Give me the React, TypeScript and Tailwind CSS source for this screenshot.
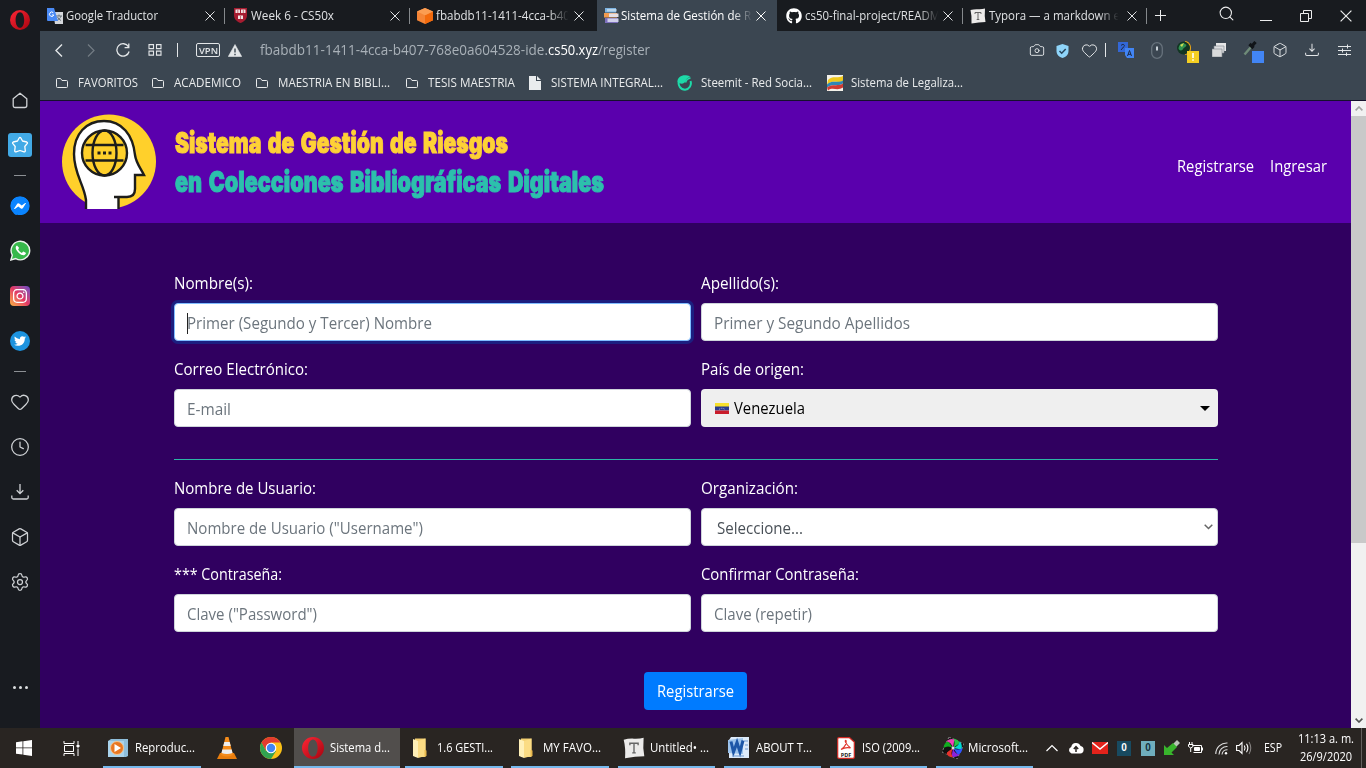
import React, { useLayoutEffect, useRef } from "react";
import { FaFacebookMessenger, FaGithub, FaInstagram, FaTwitter } from "react-icons/fa";
import { Box, Camera, Clock, Heart, Search, Settings } from "lucide-react";

/* Condenses or widens one line of text so that it fills a given width. */
function Fit({ w, children, className = "" }: { w: number; children: string; className?: string }) {
  const ref = useRef<HTMLSpanElement>(null);
  useLayoutEffect(() => {
    const el = ref.current;
    if (!el) return;
    el.style.transform = "none";
    const natural = el.getBoundingClientRect().width;
    if (natural > 0) el.style.transform = `scaleX(${w / natural})`;
  }, [w, children]);
  return (
    <span className={`block shrink-0 whitespace-pre ${className}`} style={{ width: w }}>
      <span ref={ref} className="inline-block origin-left">{children}</span>
    </span>
  );
}

function Slot({ className, children }: { className: string; children?: React.ReactNode }) {
  return <div className={`flex shrink-0 items-center justify-center ${className}`}>{children}</div>;
}

function CloseX({ size = 10 }: { size?: number }) {
  return (
    <svg width={size} height={size} viewBox="0 0 10 10" className="shrink-0" stroke="currentColor" strokeWidth="1" fill="none">
      <path d="M.5.5l9 9M9.5.5l-9 9" />
    </svg>
  );
}

function OperaO({ size }: { size: number }) {
  return (
    <svg width={size} height={size} viewBox="0 0 20 20" className="shrink-0">
      <defs>
        <linearGradient id="opera" x1="0" y1="0" x2="1" y2="1">
          <stop offset="0" stopColor="#ff2636" />
          <stop offset="1" stopColor="#a5040f" />
        </linearGradient>
      </defs>
      <path fillRule="evenodd" fill="url(#opera)" d="M10 0a10 10 0 100 20 10 10 0 000-20zm0 2.200c2.600 0 4.200 3.400 4.200 7.800s-1.600 7.800-4.200 7.800S5.600 14.400 5.600 10 7.400 2.200 10 2.200z" />
    </svg>
  );
}

function DownloadTray({ size = 18 }: { size?: number }) {
  return (
    <svg width={size} height={size} viewBox="0 0 18 18" fill="none" stroke="currentColor" strokeWidth="1.3">
      <path d="M9 1v9.500M5.700 7.300L9 10.600l3.300-3.300M.8 12.500v2c0 1 .5 1.500 1.500 1.500h13.400c1 0 1.500-.5 1.500-1.500v-2" />
    </svg>
  );
}

/* ---------- tab strip ---------- */

function TranslateIcon() {
  return (
    <svg width="17" height="16" viewBox="0 0 17 16" className="shrink-0">
      <path d="M6 4h10v12H8z" fill="#d5d8dc" />
      <path d="M9 8h6M12 6.500V8M14 8c-.5 2-2 3.500-4 4.500M10.500 9c.7 1.500 2 2.700 3.500 3.500" stroke="#657078" fill="none" />
      <path d="M0 0h7l4 13H1a1 1 0 01-1-1z" fill="#4a8af4" />
      <path d="M6.300 4.700A2.200 2.200 0 106.800 7H5" stroke="#fff" strokeWidth="1" fill="none" />
    </svg>
  );
}

function ShieldIcon() {
  return (
    <svg width="13" height="15" viewBox="0 0 13 15" className="shrink-0">
      <path d="M0 0h13v7c0 4-2.500 6.500-6.500 8C2.500 13.500 0 11 0 7z" fill="#a51c30" />
      <path d="M1.500 1.500h4.500v3.500H1.500zM7 1.500h4.500v3.500H7zM4 7.500h5v3.500H4z" fill="#f2e3e3" />
      <path d="M3.800 2v3M9.300 2v3M6.500 8v3" stroke="#a51c30" strokeWidth=".6" />
    </svg>
  );
}

function CubeIcon() {
  return (
    <svg width="16" height="16" viewBox="0 0 16 16" className="shrink-0">
      <path d="M8 0l8 3.500v8.700L8 16 0 12.200V3.500z" fill="#f58536" />
      <path d="M8 7.200L16 3.500v8.700L8 16z" fill="#f36a0c" />
      <path d="M8 0l8 3.500-8 3.700-8-3.700z" fill="#fb9d52" />
    </svg>
  );
}

function BooksIcon() {
  return (
    <svg width="15" height="15" viewBox="0 0 15 15" className="shrink-0">
      <path d="M1 0h11v4.500H1z" fill="#7db4e2" /><path d="M3 1h9.500v2.500H3z" fill="#b9d5ec" />
      <path d="M0 5h13v4.500H0z" fill="#f29b50" /><path d="M5 5.500h9.500v3.500H5z" fill="#e4dfe6" />
      <path d="M1 10h13v5H1z" fill="#7d70bd" /><path d="M3.500 10.500h11v3.500h-11z" fill="#d0d0ea" />
    </svg>
  );
}

function TyporaIcon({ size = 16 }: { size?: number }) {
  return (
    <svg width={size} height={size} viewBox="0 0 16 16" className="shrink-0">
      <path d="M.5 2Q4 1 8 1.200T15 .5Q14.300 8 15.500 14 9 14 1.500 15.500 2 8 .5 2z" fill="#ecebea" />
      <path d="M5 6V4.500h6V6M8 4.500v7M6.700 11.500h2.600" stroke="#666" strokeWidth="1" fill="none" />
    </svg>
  );
}

type TabProps = { icon: React.ReactNode; text: string; w: number; className: string; active?: boolean; fade?: boolean; sep?: boolean; gap: string };

function Tab({ icon, text, w, className, active, fade, sep, gap }: TabProps) {
  return (
    <div className={`flex h-[31px] shrink-0 items-center ${className} ${active ? "bg-[#3b4651] text-white" : "text-[#dfe1e3]"}`}>
      {icon}
      <Fit w={w} className={`${gap} ${fade ? "[mask-image:linear-gradient(to_right,black_84%,transparent_99%)]" : ""}`}>{text}</Fit>
      <span className="ml-auto flex items-center"><CloseX /></span>
      <span className={`ml-[9px] h-4 w-px ${sep ? "bg-[#85898c]" : ""}`} />
    </div>
  );
}

function TabStrip() {
  return (
    <div className="flex h-[31px] shrink-0 bg-[#181b1f] text-[12px] leading-[18px]">
      <Tab icon={<TranslateIcon />} text="Google Traductor" w={92} gap="ml-[2px]" className="w-[185px] pl-[7px]" sep />
      <Tab icon={<ShieldIcon />} text="Week 6 - CS50x" w={83} gap="ml-[4px]" className="w-[185px] pl-[9px]" sep />
      <Tab icon={<CubeIcon />} text="fbabdb11-1411-4cca-b40" w={134} gap="ml-[3px]" className="w-[187px] pl-[7px] pr-[3px]" fade />
      <Tab icon={<BooksIcon />} text="Sistema de Gestión de Ri" w={133} gap="ml-[2px]" className="w-[180px] pl-[7px] pr-[1px]" active fade />
      <Tab icon={<FaGithub size={16} className="shrink-0 text-white" />} text="cs50-final-project/READM" w={135} gap="ml-[3px]" className="w-[186px] pl-[9px]" fade sep />
      <Tab icon={<TyporaIcon />} text="Typora — a markdown e" w={131} gap="ml-[3px]" className="w-[184px] pl-[7px]" fade sep />
      <div className="flex flex-1 items-center text-[#eceded]">
        <Slot className="w-[27px]">
          <svg width="11" height="11" viewBox="0 0 11 11" stroke="currentColor"><path d="M5.500 0v11M0 5.500h11" /></svg>
        </Slot>
        <Slot className="ml-[32px] w-10"><Search size={17} strokeWidth={1.5} className="-mt-[4px]" /></Slot>
        <Slot className="w-10 pt-[10px]"><span className="h-px w-3 bg-current" /></Slot>
        <Slot className="w-10">
          <svg width="12" height="12" viewBox="0 0 12 12" fill="none" stroke="currentColor"><path d="M.5 3.500h8v8h-8zM3.500 3V.5h8v8H9" /></svg>
        </Slot>
        <Slot className="w-10"><CloseX size={12} /></Slot>
      </div>
    </div>
  );
}

/* ---------- address bar ---------- */

function AddressBar() {
  return (
    <div className="flex h-[38px] shrink-0 items-center pl-[3px] text-[#e3e6e8]">
      <Slot className="w-8"><svg width="8" height="13" viewBox="0 0 8 13" fill="none" stroke="currentColor" strokeWidth="1.4"><path d="M7 .5l-6 6 6 6" /></svg></Slot>
      <Slot className="w-8 text-[#737c84]"><svg width="8" height="13" viewBox="0 0 8 13" fill="none" stroke="currentColor" strokeWidth="1.2"><path d="M1 .5l6 6-6 6" /></svg></Slot>
      <Slot className="w-8">
        <svg width="14" height="14" viewBox="0 0 14 14" fill="none" stroke="currentColor" strokeWidth="1.3"><path d="M12.400 3.700a6.200 6.200 0 10.700 4.800M12.800.5v4.200H8.600" /></svg>
      </Slot>
      <Slot className="w-8">
        <svg width="14" height="12" viewBox="0 0 14 12" fill="none" stroke="currentColor" strokeWidth="1.1"><path d="M1 .6h4.500v4H1zM8.500 .6H13v4H8.500zM1 7.100h4.500v4H1zM8.500 7.100H13v4H8.500z" /></svg>
      </Slot>
      <Slot className="w-[13px]"><span className="h-[14px] w-px bg-current" /></Slot>
      <span className="ml-[12px] flex h-[14px] w-6 items-center justify-center rounded-[2px] border border-current text-[9px] font-semibold leading-none"><Fit w={19}>VPN</Fit></span>
      <svg width="14" height="13" viewBox="0 0 14 13" className="ml-2"><path d="M7 .5L13.700 12.500H.3z" fill="currentColor" stroke="currentColor" strokeLinejoin="round" strokeWidth=".6" /><path d="M7 4.500v4M7 9.700v1.500" stroke="#3b4651" strokeWidth="1.400" /></svg>
      <div className="ml-[18px] flex text-[14px] leading-5 text-[#a9b1b8]">
        <Fit w={288}>fbabdb11-1411-4cca-b407-768e0a604528-ide.</Fit>
        <Fit w={50} className="text-white">cs50.xyz</Fit>
        <Fit w={52}>/register</Fit>
      </div>
      <div className="ml-auto flex h-full items-center pr-[14px]">
        <Slot className="w-[26px]"><Camera size={16} strokeWidth={1.4} /></Slot>
        <Slot className="w-[26px] pr-[2px] pt-px">
          <svg width="13" height="14" viewBox="0 0 13 14"><path d="M6.500 0L12.500 2v5c0 3.600-2.400 5.800-6 7C2.900 12.800.5 10.600.5 7V2z" fill="#8fd5fa" /><path d="M3.500 7l2.200 2.200L9.700 5" stroke="#27455c" strokeWidth="1.500" fill="none" /></svg>
        </Slot>
        <Slot className="w-[26px]"><Heart size={17} strokeWidth={1.4} /></Slot>
        <Slot className="w-[6px]"><span className="h-[14px] w-px bg-current" /></Slot>
        <Slot className="w-9">
          <svg width="16" height="16" viewBox="0 0 16 16"><path d="M0 0h10v10H0z" fill="#3367d6" /><path d="M7 6h9v10H9l-2-3z" fill="#4285f4" /><path d="M3 3.500C5 1 8 3.500 5.500 5L3 8M9.500 14l2-5.500 2 5.500M10 12.300h3" stroke="#1c2b45" fill="none" /></svg>
        </Slot>
        <Slot className="w-[26px]">
          <svg width="12" height="17" viewBox="0 0 12 17"><rect x=".7" y=".7" width="10.600" height="15.600" rx="5.300" fill="none" stroke="#67727c" strokeWidth="1.300" /><path d="M5 4.500h2v4H5z" fill="#c9d1d8" /></svg>
        </Slot>
        <Slot className="w-[38px]">
          <svg width="22" height="22" viewBox="0 0 22 22" className="mr-[2px] mt-[4px]">
            <path d="M8 0c8 1 8 13 0 14z" fill="#e9a515" />
            <circle cx="6.500" cy="7" r="6.500" fill="#123522" /><path d="M1.500 7c1-5 5-6 8-3-1 3-3 2-4 5-2 1-4 0-4-2z" fill="#2f9150" /><path d="M3 4l4-2-2 4z" fill="#d7df53" />
            <path d="M10 10h12v12H10z" fill="#f5cf22" /><path d="M16 12v5M16 18.200v1.500" stroke="#fff" strokeWidth="1.600" />
          </svg>
        </Slot>
        <Slot className="w-[22px]">
          <svg width="14" height="14" viewBox="0 0 14 14"><path d="M4 0h10v8H4z" fill="#e6e7e8" /><path d="M2 3h10v7H2z" fill="#dcdde0" stroke="#7d848a" strokeWidth=".6" /><path d="M0 6h10v8H0z" fill="#d9dadb" stroke="#7d848a" strokeWidth=".6" /></svg>
        </Slot>
        <Slot className="w-[42px]">
          <svg width="22" height="22" viewBox="0 0 22 22" className="ml-[5px] mt-[4px]"><path d="M1.500 13.500L8 6" stroke="#6f8b78" strokeWidth="2.400" /><path d="M6.500 3l4 4M9 5l3.500-4" stroke="#101418" strokeWidth="3.200" /><path d="M9 10h12v12H9z" fill="#4285f4" /></svg>
        </Slot>
        <Slot className="w-4"><Box size={16} strokeWidth={1.4} className="shrink-0" /></Slot>
        <Slot className="w-12"><DownloadTray size={14} /></Slot>
        <Slot className="w-4">
          <svg width="13" height="12" viewBox="0 0 13 12" stroke="currentColor"><path d="M0 2.500h13M0 6.500h13M0 10.500h13M9.500 .5v4M4.500 4.500v4M8.500 8.500v3.500" /></svg>
        </Slot>
      </div>
    </div>
  );
}

/* ---------- bookmarks ---------- */

function FolderOutline() {
  return <svg width="12" height="10" viewBox="0 0 12 10" fill="none" stroke="currentColor" className="shrink-0"><path d="M.5 1.500q0-1 1-1h3L6 2.500h4.500q1 0 1 1v5q0 1-1 1h-9q-1 0-1-1z" /></svg>;
}

function Bookmarks() {
  return (
    <div className="flex h-[31px] shrink-0 items-center pl-4 pb-[3px] text-[12px] leading-[18px] text-[#e9ebec]">
      <FolderOutline /><Fit w={60} className="ml-[10px]">FAVORITOS</Fit>
      <span className="w-[14px]" /><FolderOutline /><Fit w={67} className="ml-[10px]">ACADEMICO</Fit>
      <span className="w-[15px]" /><FolderOutline /><Fit w={112} className="ml-[10px]">MAESTRIA EN BIBLI...</Fit>
      <span className="w-4" /><FolderOutline /><Fit w={87} className="ml-[10px]">TESIS MAESTRIA</Fit>
      <svg width="12" height="14" viewBox="0 0 12 14" className="ml-[14px] shrink-0"><path d="M0 0h7v5h5v9H0z" fill="#e9ecee" /><path d="M8 0l4 4H8z" fill="#e9ecee" /></svg>
      <Fit w={112} className="ml-[10px]">SISTEMA INTEGRAL...</Fit>
      <svg width="16" height="16" viewBox="0 0 16 16" className="ml-[14px] shrink-0" fill="none" stroke="#1ddaa8">
        <path d="M2 6A6.600 6.600 0 008 14.800 6.600 6.600 0 0013.500 6" strokeWidth="2" />
        <path d="M.5 7C0 3 4-.3 9 .2c2 .2 3.500.8 4.500 1.800-3 .5-4 1.700-4.500 3.500C8 8.500 4 10 .5 7z" fill="#1ddaa8" stroke="none" />
        <path d="M8.500 7.500c.5-2 2-4 5-4.500" strokeWidth="1.600" />
      </svg>
      <Fit w={111} className="ml-2">Steemit - Red Socia...</Fit>
      <svg width="16" height="16" viewBox="0 0 16 16" className="ml-[15px] shrink-0"><path d="M0 0h16v16H0z" fill="#f3f1ea" /><path d="M1 5C6 0 9 4 16 1v5C10 9 6 4 0 10z" fill="#efc81b" /><path d="M0 9.500C6 4 10 9 16 5.500v3C10 12 6 8 0 12.500z" fill="#2f86b5" /><path d="M0 12.500C6 8 10 12 16 8.500v4c-6 4-10-1-15 3z" fill="#cf3a31" /></svg>
      <Fit w={112} className="ml-2">Sistema de Legaliza...</Fit>
    </div>
  );
}

/* ---------- sidebar ---------- */

function Sidebar() {
  return (
    <aside className="flex w-10 shrink-0 flex-col items-center bg-[#181b20] text-[#cfd2d5]">
      <Slot className="h-10"><OperaO size={20} /></Slot>
      <Slot className="mt-[38px] h-[45px]">
        <svg width="16" height="17" viewBox="0 0 16 17" fill="none" stroke="currentColor" strokeWidth="1.300" strokeLinejoin="round"><path d="M1.200 6.800L8 1.200l6.800 5.600v6.700q0 2-2 2H3.200q-2 0-2-2z" /></svg>
      </Slot>
      <Slot className="h-[44px]">
        <span className="flex size-6 items-center justify-center rounded-[3px] bg-[#42aae6] text-white">
          <svg width="18" height="18" viewBox="0 0 18 18" fill="none" stroke="currentColor" strokeWidth="1.300" strokeLinejoin="round"><path d="M8.300 1.800q.7-1 1.400 0L11.500 5l4.300 1q1 .5.500 1.400L13.800 10.500l.5 4.300q-.2 1.200-1.300 1L9 14.500l-4 1.300q-1.100.2-1.300-1l.5-4.300L1.700 7.400Q1.200 6.500 2.200 6l4.300-1z" /></svg>
        </span>
      </Slot>
      <Slot className="h-4"><span className="h-px w-3 bg-[#8c9094]" /></Slot>
      <Slot className="h-[45px]"><FaFacebookMessenger size={20} className="rounded-full text-[#0a84ff] [background:radial-gradient(#fff_45%,transparent_46%)]" /></Slot>
      <Slot className="h-[45px]">
        <svg width="21" height="21" viewBox="0 0 21 21"><path d="M.9 20l1.400-4.900A9.300 9.300 0 115.800 18.600z" fill="#37b94b" stroke="#eef5ee" strokeWidth="1.400" /><path d="M7 5.500c-2 1-1.500 3.500.5 6s5 4.300 7 3.500c1.500-.7 1.600-1.800 1.200-2.200l-2.300-1.200c-.8 0-1 1.500-1.600 1.300-1.600-.6-3-2-3.600-3.400-.2-.6 1-.9.800-1.700z" fill="#fff" /></svg>
      </Slot>
      <Slot className="h-[45px]">
        <span className="flex size-5 items-center justify-center rounded-[4px] bg-linear-to-tr from-[#f8b03c] via-[#e33663] to-[#6942c8] text-white"><FaInstagram size={16} /></span>
      </Slot>
      <Slot className="h-[45px]">
        <span className="flex size-5 items-center justify-center rounded-full bg-[#1c93df] text-white"><FaTwitter size={12} /></span>
      </Slot>
      <Slot className="h-4"><span className="h-px w-3 bg-[#8c9094]" /></Slot>
      <Slot className="h-[45px]"><Heart size={20} strokeWidth={1.5} /></Slot>
      <Slot className="h-[45px]"><Clock size={20} strokeWidth={1.5} /></Slot>
      <Slot className="h-[45px]"><DownloadTray /></Slot>
      <Slot className="h-[45px]"><Box size={20} strokeWidth={1.5} /></Slot>
      <Slot className="h-[45px]"><Settings size={20} strokeWidth={1.5} /></Slot>
      <div className="mt-[82px] flex gap-[3px]">
        <span className="size-[3px] rounded-full bg-[#dcdee0]" /><span className="size-[3px] rounded-full bg-[#dcdee0]" /><span className="size-[3px] rounded-full bg-[#dcdee0]" />
      </div>
    </aside>
  );
}

/* ---------- page ---------- */

function HeadLogo() {
  return (
    <svg width="95" height="96" viewBox="0 0 95 96" className="shrink-0" fill="none" stroke="#1d1d1b" strokeWidth="2.400">
      <circle cx="47" cy="47.500" r="47" fill="#ffd02b" stroke="none" />
      <path d="M24 95V86C22 70 12 60 12 40 12 20 24 7 42 7c18 0 29 14 31 34 1 8 6 14 9 20h-9v14q0 8-8 8h-9v12z" fill="#fff" stroke="none" />
      <path d="M24 95V86C22 70 12 60 12 40 12 20 24 7 42 7c18 0 29 14 31 34 1 8 6 14 9 20h-9v14q0 8-8 8H52M56.500 83v12" />
      <circle cx="42.500" cy="39" r="22.500" fill="#ffd02b" />
      <ellipse cx="42.500" cy="39" rx="12" ry="22.500" />
      <path d="M23.500 31h38M23.500 46.500h38" />
      <path d="M35.500 37.500h3v3h-3zM41 37.500h3v3h-3zM46.500 37.500h3v3h-3z" fill="#1d1d1b" stroke="none" />
    </svg>
  );
}

function Field({ label, lw, children }: { label: string; lw: number; children: React.ReactNode }) {
  return (
    <div className="flex w-[517px] flex-col gap-2">
      <div className="h-6 text-white"><Fit w={lw}>{label}</Fit></div>
      {children}
    </div>
  );
}

function Input({ text, w, focus }: { text: string; w: number; focus?: boolean }) {
  return (
    <div className={`flex h-[38px] items-center rounded-[4px] border bg-white pl-3 pt-[2px] text-[#6c757d] ${focus ? "border-[#80bdff] shadow-[0_0_0_3px_#1c1f80]" : "border-[#ced4da]"}`}>
      {focus && <span className="-mr-px h-[21px] w-px bg-[#222]" />}
      <Fit w={w}>{text}</Fit>
    </div>
  );
}

function Page() {
  return (
    <div className="flex min-h-0 flex-1 border-t border-[#15102c] text-[15.500px] leading-6">
      <div className="flex flex-1 flex-col bg-[#300060]">
        <header className="flex h-[122px] shrink-0 items-center bg-[#5a00ad] pl-[22px] pr-6">
          <HeadLogo />
          <div className="ml-[18px] flex flex-col font-[Inter] text-[28.500px] font-black leading-[39px] [-webkit-text-stroke:1.1px_currentColor] [word-spacing:3px]">
            <Fit w={333} className="text-[#fed136]">Sistema de Gestión de Riesgos</Fit>
            <Fit w={429} className="text-[#2cc0ac]">en Colecciones Bibliográficas Digitales</Fit>
          </div>
          <nav className="ml-auto flex gap-4 pt-2 text-white">
            <Fit w={77}>Registrarse</Fit>
            <Fit w={57}>Ingresar</Fit>
          </nav>
        </header>
        <main className="ml-[134px] flex w-[1044px] flex-col pt-12">
          <div className="grid grid-cols-2 gap-x-[10px] gap-y-4">
            <Field label="Nombre(s):" lw={79}><Input text="Primer (Segundo y Tercer) Nombre" w={245} focus /></Field>
            <Field label="Apellido(s):" lw={78}><Input text="Primer y Segundo Apellidos" w={196} /></Field>
            <Field label="Correo Electrónico:" lw={134}><Input text="E-mail" w={44} /></Field>
            <Field label="País de origen:" lw={103}>
              <div className="flex h-[38px] items-center rounded-[4px] bg-[#efefef] pl-[14px] pr-2 text-black">
                <svg width="14" height="11" viewBox="0 0 14 11"><path d="M0 0h14v4H0z" fill="#f7e02d" /><path d="M0 3.500h14v4H0z" fill="#2b3c8f" /><path d="M0 7.500h14V11H0z" fill="#c91c2b" /><path d="M4 6.500q3-2.500 6 0" stroke="#aab2d8" strokeDasharray="1 1" fill="none" /></svg>
                <Fit w={71} className="ml-[5px]">Venezuela</Fit>
                <span className="ml-auto border-x-[5px] border-t-[5px] border-x-transparent border-t-black" />
              </div>
            </Field>
          </div>
          <div role="separator" className="mb-4 mt-8 h-px bg-[#2cb5a5]" />
          <div className="grid grid-cols-2 gap-x-[10px] gap-y-4">
            <Field label="Nombre de Usuario:" lw={142}><Input text={'Nombre de Usuario ("Username")'} w={236} /></Field>
            <Field label="Organización:" lw={97}>
              <div className="flex h-[38px] items-center rounded-[4px] border border-[#ced4da] bg-white pl-[15px] pr-1 text-[#495057]">
                <Fit w={86} className="pt-[2px]">Seleccione...</Fit>
                <svg width="9" height="6" viewBox="0 0 9 6" className="ml-auto" fill="none" stroke="#666" strokeWidth="1.500"><path d="M.7.700l3.800 3.800L8.300.7" /></svg>
              </div>
            </Field>
            <Field label="*** Contraseña:" lw={108}><Input text={'Clave ("Password")'} w={130} /></Field>
            <Field label="Confirmar Contraseña:" lw={158}><Input text="Clave (repetir)" w={98} /></Field>
          </div>
          <button className="ml-[470px] mt-10 flex h-[38px] w-[103px] items-center justify-center rounded-[4px] bg-[#007bff] text-white">
            <Fit w={77} className="text-left">Registrarse</Fit>
          </button>
        </main>
      </div>
      <div className="flex w-[15px] shrink-0 flex-col items-center bg-[#f1f1f1]">
        <Slot className="h-[15px] w-full"><svg width="8" height="5" viewBox="0 0 8 5" fill="none" stroke="#a3a3a3" strokeWidth="1.600"><path d="M.6 4.400L4 1l3.400 3.400" /></svg></Slot>
        <div className="h-[427px] w-full bg-[#c9c9c9]" />
        <Slot className="mt-auto h-[15px] w-full"><svg width="8" height="5" viewBox="0 0 8 5" fill="none" stroke="#505050" strokeWidth="1.600"><path d="M.6.600L4 4 7.400.6" /></svg></Slot>
      </div>
    </div>
  );
}

/* ---------- taskbar ---------- */

function Task({ icon, text, w, className, gap, active }: { icon: React.ReactNode; text: string; w: number; className: string; gap: string; active?: boolean }) {
  return (
    <div className={`flex h-10 shrink-0 items-center border-b-2 border-[#76b9ed] pt-px ${active ? "bg-[#514e4c]" : ""} ${className}`}>
      {icon}
      <Fit w={w} className={gap}>{text}</Fit>
    </div>
  );
}

function FolderYellow() {
  return <svg width="16" height="20" viewBox="0 0 16 20" className="shrink-0"><path d="M3 .5h10.500V19H3z" fill="#f3cf70" /><path d="M1 1l5 2v17l-5-2z" fill="#fff0b8" /><path d="M6 3l7.500-2.500V18L6 20z" fill="#fbdc84" /><path d="M12.500 12l2 .5V18l-2 .5z" fill="#e9b94e" /></svg>;
}

function Pinwheel() {
  const colors = ["#24c648", "#00d8d0", "#3055ff", "#8a22dc", "#e5322c", "#111111", "#12ab20", "#ed40b7"];
  return (
    <svg width="22" height="22" viewBox="-11 -11 22 22" className="shrink-0">
      <path d="M-4-11L11-4 4 11-11 4z" fill="#111" stroke="#888" strokeDasharray="2 2" />
      {colors.map((c, i) => <path key={c} d="M0 0Q3-5 0-9.500Q5-9 7-5z" fill={c} transform={`rotate(${i * 45})`} />)}
      <circle r="1.500" fill="#ddd" />
    </svg>
  );
}

function Taskbar() {
  return (
    <footer className="flex h-10 shrink-0 items-center bg-[#292522] text-[12px] leading-[18px] text-white">
      <Slot className="ml-4 w-4"><svg width="16" height="16" viewBox="0 0 16 16" fill="#fff"><path d="M0 2.200L6.500 1.300v6.200H0zM7.300 1.200L16 0v7.500H7.300zM0 8.300h6.500v6.300L0 13.700zM7.300 8.300H16V16l-8.700-1.200z" /></svg></Slot>
      <Slot className="ml-[31px] w-[17px]"><svg width="17" height="15" viewBox="0 0 17 15" fill="none" stroke="#fff"><path d="M1.500 4.500h9v6h-9zM1 0v2.500h10V0M1 15v-2.500h10V15M15 0v3M15 7.500V15" /><path d="M14 4h2v2h-2z" fill="#fff" /></svg></Slot>
      <Task className="ml-[23px] w-[98px] pl-[5px]" gap="ml-[7px]" text="Reproduc..." w={60} icon={
        <svg width="20" height="20" viewBox="0 0 20 20" className="shrink-0"><path d="M3 1h17v17l-2 1H0V3z" fill="#8fbedb" /><path d="M0 3h16v16H0z" fill="#a9d3ec" /><circle cx="9" cy="10" r="6.500" fill="#e87722" stroke="#f5c48d" /><path d="M6.500 6l6.500 4-6.500 4z" fill="#fff" /></svg>} />
      <svg width="20" height="22" viewBox="0 0 20 22" className="ml-4 shrink-0"><path d="M3 16h14l3 6H0z" fill="#e87d0d" /><path d="M8.500 0h3L16 18q-6 3-12 0z" fill="#f58c1b" /><path d="M7.300 5h5.400l1 4H6.300zM5.300 12.500h9.400l.8 3.500q-5.500 2-11 0z" fill="#eee" /></svg>
      <svg width="22" height="22" viewBox="0 0 22 22" className="ml-[23px] shrink-0">
        <circle cx="11" cy="11" r="11" fill="#fbc116" /><path d="M1.500 5.500A11 11 0 0120.500 5.500H11L6 14z" fill="#e33b2e" /><path d="M1.500 5.500A11 11 0 0011 22l5-8H6z" fill="#31a350" /><circle cx="11" cy="11" r="5.300" fill="#fff" /><circle cx="11" cy="11" r="4.200" fill="#4285f4" />
      </svg>
      <Task className="ml-3 w-[106px] pl-[8px]" gap="ml-[6px]" text="Sistema d..." w={60} active icon={<OperaO size={22} />} />
      <Task className="ml-[5px] w-[98px] pl-[7px]" gap="ml-[9px]" text="1.6 GESTI..." w={56} icon={<FolderYellow />} />
      <Task className="ml-2 w-[98px] pl-[7px]" gap="ml-[9px]" text="MY FAVO..." w={58} icon={<FolderYellow />} />
      <Task className="ml-[9px] w-[97px] pl-[5px]" gap="ml-[5px]" text="Untitled• ..." w={59} icon={<TyporaIcon size={22} />} />
      <Task className="ml-[9px] w-[97px] pl-1" gap="ml-[6px]" text="ABOUT T..." w={56} icon={
        <svg width="22" height="22" viewBox="0 0 22 22" className="shrink-0"><path d="M3 0h18v21H1V3z" fill="#dceafa" /><path d="M0 3l15-2v16L0 16z" fill="#9cc3ec" /><path d="M3 4.500l2.500 10.500L9 5.500l3 9.500L15 3.500" stroke="#1d57a8" strokeWidth="3" fill="none" /><path d="M16 4h4M17 8h3M17 12h3M4 19h12" stroke="#6e9bd1" /></svg>} />
      <Task className="ml-[9px] w-[97px] pl-[7px]" gap="ml-[7px]" text="ISO (2009..." w={58} icon={
        <svg width="18" height="22" viewBox="0 0 18 22" className="shrink-0"><path d="M2 .7h10.500L17.300 5v15q0 1.300-1.300 1.300H2Q.7 21.300.7 20V2Q.7.7 2 .7z" fill="#fff" stroke="#d22a24" strokeWidth="1.200" /><path d="M4 12.500c4-2 6-7 5-9-1.500-.5-1 3 4.500 7.500-2-.5-6-.5-9.500 1.500z" fill="none" stroke="#e0352d" strokeWidth="1.200" /><text x="9" y="19.500" textAnchor="middle" fontSize="5.500" fontWeight="bold" fill="#222">PDF</text></svg>} />
      <Task className="ml-[9px] w-[97px] pl-[6px]" gap="ml-[4px]" text="Microsoft..." w={60} icon={<Pinwheel />} />
      <svg width="12" height="8" viewBox="0 0 12 8" className="ml-[13px] shrink-0" fill="none" stroke="#fff" strokeWidth="1.200"><path d="M.5 7L6 1.500 11.500 7" /></svg>
      <svg width="16" height="12" viewBox="0 0 16 12" className="ml-[10px] shrink-0"><path d="M3.500 11.500a3.500 3.500 0 01-.3-6.600A5 5 0 0112.600 4a3.800 3.800 0 01-.4 7.500z" fill="#fff" /><path d="M8 10V5M5.800 7L8 4.700 10.200 7" stroke="#292522" strokeWidth="1.500" fill="none" /></svg>
      <svg width="16" height="12" viewBox="0 0 16 12" className="ml-2 shrink-0"><path d="M0 0h16v12H0z" fill="#e3231b" /><path d="M0 .5l8 6.500 8-6.500" stroke="#fff" strokeWidth="1.400" fill="none" /></svg>
      <span className="ml-[9px] flex h-[15px] w-[14px] shrink-0 items-center justify-center bg-[#184a60] font-['Liberation_Sans'] text-[10px] font-bold">0</span>
      <span className="ml-[10px] flex h-[15px] w-[14px] shrink-0 items-center justify-center bg-[#6faebd] font-['Liberation_Sans'] text-[10px] font-bold text-[#12303b]">0</span>
      <svg width="16" height="16" viewBox="0 0 16 16" className="ml-[9px] shrink-0"><path d="M13 0l3 3-4 4-3-3z" fill="#b9c3b6" /><path d="M0 5v10h10l-2.500-2.500L13 7 9 3 3 8z" fill="#38b52c" /></svg>
      <svg width="16" height="13" viewBox="0 0 16 13" className="ml-2 shrink-0" fill="none" stroke="#fff"><path d="M4.500 3.500h9v7h-8M14.500 5.500v3M1.500 0v2M4 0v2M.5 2.500h4.500v2l-2.200 1.500L.5 4.500zM2.700 6v4" /><path d="M6.500 5.500h5v3h-5z" fill="#fff" /></svg>
      <svg width="13" height="13" viewBox="0 0 13 13" className="ml-[11px] shrink-0" fill="none" stroke="#ddd" strokeWidth="1.100"><path d="M.8 12A11 11 0 0112.500 1M4 12.500A8 8 0 0112.500 4.500M7 12.500A5.300 5.300 0 0112.500 7.700" /><circle cx="11" cy="11.300" r="1.200" fill="#fff" stroke="none" /></svg>
      <svg width="16" height="14" viewBox="0 0 16 14" className="ml-2 shrink-0" fill="none" stroke="#fff" strokeWidth="1.100"><path d="M.6 4.500h2.500L6 1.500v11L3.100 9.500H.6zM8.300 4.500q1.500 2.500 0 5M10.500 2.800q2.700 4.200 0 8.400" /><path d="M13 1q3.500 6 0 12" stroke="#858280" /></svg>
      <Fit w={18} className="ml-3">ESP</Fit>
      <div className="ml-4 flex w-[56px] shrink-0 flex-col items-center">
        <Fit w={56}>11:13 a. m.</Fit>
        <Fit w={52}>26/9/2020</Fit>
      </div>
      <span className="ml-[7px] h-10 w-px bg-[#63605e]" />
    </footer>
  );
}

export default function App() {
  return (
    <div className="flex h-[768px] w-[1366px] flex-col overflow-hidden font-['Open_Sans','Noto_Sans',sans-serif]">
      <div className="flex h-[728px] shrink-0">
        <Sidebar />
        <div className="flex min-w-0 flex-1 flex-col bg-[#3b4651]">
          <TabStrip />
          <AddressBar />
          <Bookmarks />
          <Page />
        </div>
      </div>
      <Taskbar />
    </div>
  );
}
